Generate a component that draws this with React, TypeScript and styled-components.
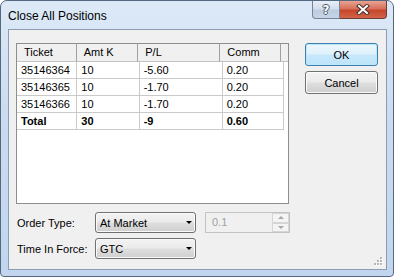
import styled, { createGlobalStyle } from 'styled-components'

const GlobalStyle = createGlobalStyle`
  html, body {
    margin: 0;
    padding: 0;
    background: #ffffff;
  }
  body {
    font-family: "Liberation Sans", Arial, sans-serif;
  }
`

const Window = styled.div`
  width: 394px;
  height: 277px;
  box-sizing: border-box;
  border: 1px solid #56687f;
  border-radius: 7px 7px 4px 4px;
  background: linear-gradient(#dde9f7, #c9dbf0 45%, #c1d6ee);
  display: flex;
  flex-direction: column;
  overflow: hidden;
`

const TitleBar = styled.div`
  height: 28px;
  display: flex;
  align-items: flex-start;
  justify-content: space-between;
  padding-left: 7px;
`

const Title = styled.div`
  margin-top: 8px;
  font-size: 12px;
  line-height: 15px;
  color: #000;
`

const Caption = styled.div`
  display: flex;
  margin-right: 6px;
`

const CaptionButton = styled.div<{ $close?: boolean }>`
  width: ${({ $close }) => ($close ? '47px' : '28px')};
  height: 18px;
  box-sizing: border-box;
  border: 1px solid ${({ $close }) => ($close ? '#6e3b33' : '#73839a')};
  border-top: none;
  border-left: ${({ $close }) => ($close ? 'none' : '1px solid #73839a')};
  border-radius: ${({ $close }) => ($close ? '0 0 4px 0' : '0 0 0 4px')};
  background: ${({ $close }) =>
    $close
      ? 'linear-gradient(#e8a493, #d7705b 45%, #c6462c 55%, #d2654a)'
      : 'linear-gradient(#e6eef8, #d3deec 45%, #bccbdf 55%, #c7d5e6)'};
  display: flex;
  align-items: center;
  justify-content: center;
`

const HelpGlyph = styled.span`
  font-family: "DejaVu Sans", sans-serif;
  font-size: 12px;
  font-weight: bold;
  line-height: 12px;
  color: #ffffff;
  text-shadow: 1px 0 #4a5566, -1px 0 #4a5566, 0 1px #4a5566, 0 -1px #4a5566;
`

const Client = styled.div`
  position: relative;
  margin: 0 6px 0 7px;
  height: 241px;
  box-sizing: border-box;
  border: 1px solid #8c9db3;
  background: #f0f0f0;
  padding: 13px 0 0 7px;
`

const TopSection = styled.div`
  display: flex;
  align-items: flex-start;
`

const GridBox = styled.div`
  width: 273px;
  height: 161px;
  box-sizing: border-box;
  border: 1px solid #8e8e8e;
  background: #ffffff;
  overflow: hidden;
`

const Row = styled.div<{ $header?: boolean }>`
  display: flex;
  height: ${({ $header }) => ($header ? '18px' : '17px')};
`

const HeaderCell = styled.div<{ $w?: number }>`
  ${({ $w }) => ($w ? `width: ${$w}px;` : 'flex: 1;')}
  box-sizing: border-box;
  background: #f0f0f0;
  border-bottom: 1px solid #c4c4c4;
  border-right: ${({ $w }) => ($w ? '1px solid #a0a0a0' : 'none')};
  padding-left: 7px;
  font-size: 11px;
  line-height: 17px;
  color: #000;
  white-space: nowrap;
`

const Cell = styled.div<{ $w?: number; $bold?: boolean }>`
  ${({ $w }) => ($w ? `width: ${$w}px;` : 'flex: 1;')}
  box-sizing: border-box;
  border-bottom: ${({ $w }) => ($w ? '1px solid #cacaca' : 'none')};
  border-right: ${({ $w }) => ($w ? '1px solid #cacaca' : 'none')};
  padding-left: 4px;
  font-size: 11px;
  font-weight: ${({ $bold }) => ($bold ? 'bold' : 'normal')};
  line-height: 16px;
  color: #000;
  white-space: nowrap;
`

const ButtonColumn = styled.div`
  margin-left: 16px;
  display: flex;
  flex-direction: column;
  gap: 5px;
`

const Button = styled.button<{ $default?: boolean }>`
  width: 73px;
  height: 23px;
  box-sizing: border-box;
  margin: 0;
  padding: 0;
  border: 1px solid ${({ $default }) => ($default ? '#3c7fb1' : '#707070')};
  border-radius: 3px;
  background: ${({ $default }) =>
    $default
      ? 'linear-gradient(#ecf7fd, #e0f2fc 45%, #c6e8fb 55%, #bde4fa)'
      : 'linear-gradient(#f3f3f3, #ebebeb 45%, #dddddd 55%, #cfcfcf)'};
  box-shadow: inset 0 0 0 1px ${({ $default }) => ($default ? '#bfe7fb' : '#fbfbfb')};
  font-family: "Liberation Sans", Arial, sans-serif;
  font-size: 11px;
  color: #000;
`

const Form = styled.div`
  margin-top: 8px;
  padding-left: 1px;
  display: flex;
  flex-direction: column;
  gap: 5px;
`

const FormRow = styled.div`
  display: flex;
  align-items: center;
  height: 21px;
`

const Label = styled.div`
  width: 78px;
  font-size: 11px;
  color: #000;
`

const Combo = styled.div`
  width: 101px;
  height: 21px;
  box-sizing: border-box;
  border: 1px solid #707070;
  border-radius: 3px;
  background: linear-gradient(#f3f3f3, #ebebeb 45%, #dddddd 55%, #cfcfcf);
  box-shadow: inset 0 0 0 1px #fafafa;
  display: flex;
  align-items: center;
  justify-content: space-between;
  padding: 0 3px 0 4px;
  font-size: 11px;
  color: #000;
`

const Arrow = styled.div<{ $color?: string; $size?: number }>`
  width: 0;
  height: 0;
  border-left: ${({ $size = 3.5 }) => $size}px solid transparent;
  border-right: ${({ $size = 3.5 }) => $size}px solid transparent;
  border-top: ${({ $size = 3.5 }) => $size}px solid ${({ $color = '#000' }) => $color};
`

const UpArrow = styled.div`
  width: 0;
  height: 0;
  border-left: 3px solid transparent;
  border-right: 3px solid transparent;
  border-bottom: 3px solid #a8a8a8;
`

const Spin = styled.div`
  margin-left: 9px;
  width: 85px;
  height: 21px;
  box-sizing: border-box;
  border: 1px solid #c3c3c3;
  background: #f0f0f0;
  display: flex;
  align-items: stretch;
`

const SpinText = styled.div`
  flex: 1;
  padding-left: 6px;
  font-size: 11px;
  line-height: 19px;
  color: #a0a0a0;
`

const SpinButtons = styled.div`
  width: 17px;
  display: flex;
  flex-direction: column;
`

const SpinButton = styled.div`
  flex: 1;
  box-sizing: border-box;
  border: 1px solid #d5d5d5;
  background: #f4f4f4;
  display: flex;
  align-items: center;
  justify-content: center;
`

const Grip = styled.svg`
  position: absolute;
  right: 3px;
  bottom: 3px;
`

const columns = [
  { title: 'Ticket', width: 61 },
  { title: 'Amt K', width: 63 },
  { title: 'P/L', width: 84 },
  { title: 'Comm', width: 62 },
]

const rows = [
  ['35146364', '10', '-5.60', '0.20'],
  ['35146365', '10', '-1.70', '0.20'],
  ['35146366', '10', '-1.70', '0.20'],
]

const total = ['Total', '30', '-9', '0.60']

const gripDots = [
  [6, 0],
  [3, 3],
  [6, 3],
  [0, 6],
  [3, 6],
  [6, 6],
]

const App = () => {
  return (
    <>
      <GlobalStyle />
      <Window>
        <TitleBar>
          <Title>Close All Positions</Title>
          <Caption>
            <CaptionButton>
              <HelpGlyph>?</HelpGlyph>
            </CaptionButton>
            <CaptionButton $close>
              <svg width="14" height="11" viewBox="0 0 14 11">
                <path d="M3 2 L11 9 M11 2 L3 9" stroke="#43302c" strokeWidth="4" strokeLinecap="square" />
                <path d="M3 2 L11 9 M11 2 L3 9" stroke="#ffffff" strokeWidth="2" strokeLinecap="square" />
              </svg>
            </CaptionButton>
          </Caption>
        </TitleBar>
        <Client>
          <TopSection>
            <GridBox>
              <Row $header>
                {columns.map((c) => (
                  <HeaderCell key={c.title} $w={c.width}>
                    {c.title}
                  </HeaderCell>
                ))}
                <HeaderCell />
              </Row>
              {rows.map((r) => (
                <Row key={r[0]}>
                  {r.map((v, i) => (
                    <Cell key={i} $w={columns[i].width}>
                      {v}
                    </Cell>
                  ))}
                  <Cell />
                </Row>
              ))}
              <Row>
                {total.map((v, i) => (
                  <Cell key={i} $w={columns[i].width} $bold>
                    {v}
                  </Cell>
                ))}
                <Cell />
              </Row>
            </GridBox>
            <ButtonColumn>
              <Button $default>OK</Button>
              <Button>Cancel</Button>
            </ButtonColumn>
          </TopSection>
          <Form>
            <FormRow>
              <Label>Order Type:</Label>
              <Combo>
                <span>At Market</span>
                <Arrow />
              </Combo>
              <Spin>
                <SpinText>0.1</SpinText>
                <SpinButtons>
                  <SpinButton>
                    <UpArrow />
                  </SpinButton>
                  <SpinButton>
                    <Arrow $color="#a8a8a8" $size={3} />
                  </SpinButton>
                </SpinButtons>
              </Spin>
            </FormRow>
            <FormRow>
              <Label>Time In Force:</Label>
              <Combo>
                <span>GTC</span>
                <Arrow />
              </Combo>
            </FormRow>
          </Form>
          <Grip width="9" height="9" viewBox="0 0 9 9">
            {gripDots.map(([x, y]) => (
              <g key={`${x}-${y}`}>
                <rect x={x + 1} y={y + 1} width="2" height="2" fill="#ffffff" />
                <rect x={x} y={y} width="2" height="2" fill="#b8b8b8" />
              </g>
            ))}
          </Grip>
        </Client>
      </Window>
    </>
  )
}

export default App
